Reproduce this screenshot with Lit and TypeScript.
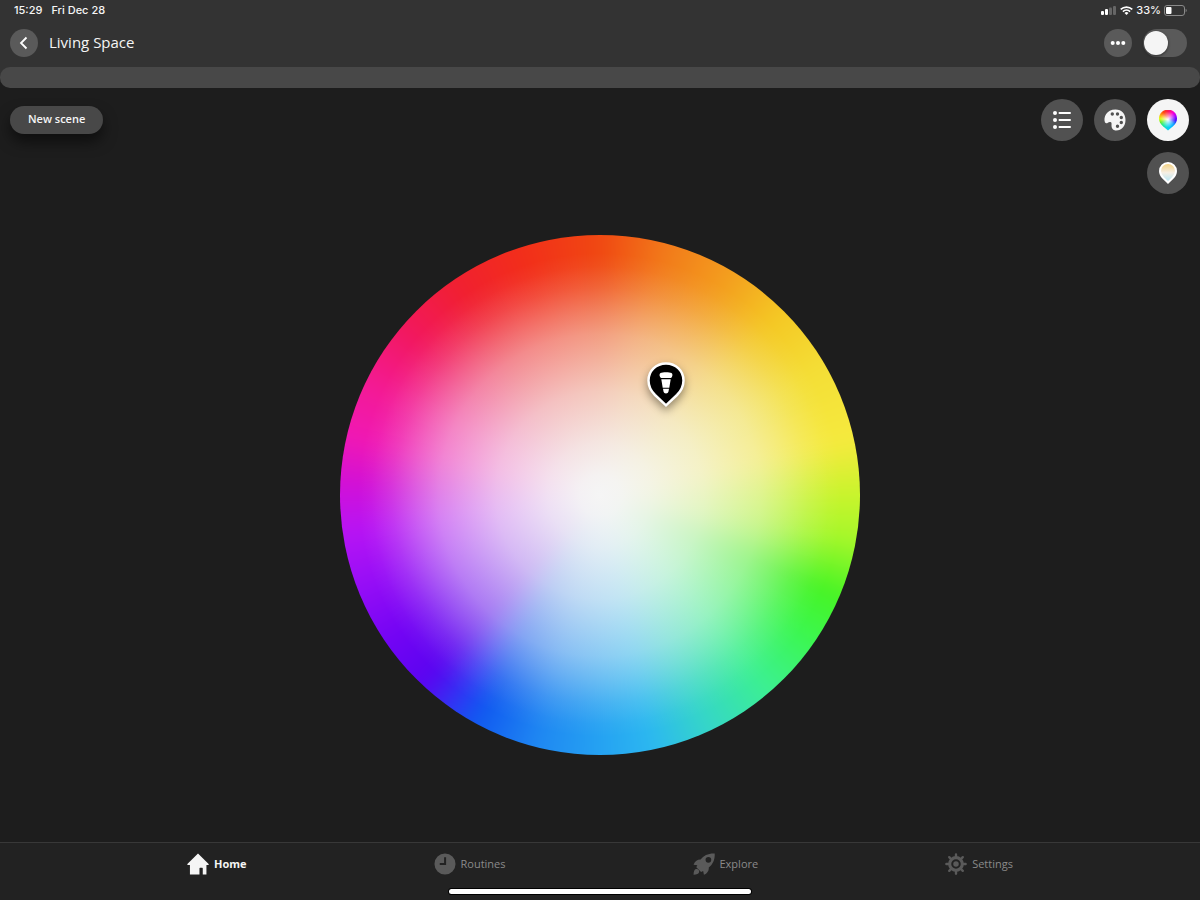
import { LitElement, html, css, svg } from "lit";
import { customElement, state } from "lit/decorators.js";

const icons = {
  home: svg`<path d="M12 .5 23.600 12c.4.5.1 1-.5 1H21.200V23.500H17.200V16.800c0-.4-.2-.6-.6-.6h-2.400c-.4 0-.6.2-.6.6v6.700H3.200V13H.9c-.6 0-.9-.5-.5-1z" fill="currentColor"/>`,
  clock: svg`<path fill-rule="evenodd" fill="currentColor" d="M12 .5a11.500 11.500 0 1 0 0 23 11.500 11.500 0 0 0 0-23zM11 4.500h2.200v8.700H6.300V11H11z"/>`,
  rocket: svg`<path fill-rule="evenodd" fill="currentColor" d="M23.700.5C16.500.2 11.800 2.700 8.300 7.200 5.200 7 2.300 8.600.6 12.800l4.200.5c-.5.8-.9 1.500-1.200 2.300l5.200 5.200c.8-.3 1.500-.7 2.300-1.200l.8 4.200c4.200-1.800 5.600-4.900 5.300-8C21.600 12.300 24 7.500 23.700.5zM16.800 4.300a3.100 3.100 0 1 1 0 6.200 3.100 3.100 0 0 1 0-6.200z"/><path fill="currentColor" d="M3.300 17.500c-1.800.5-2.600 2.600-2.700 6.100 3.500-.1 5.600-.9 6.100-2.700.5-2.100-1.300-3.900-3.400-3.400z"/>`,
  gear: svg`<g fill="none" stroke="currentColor" stroke-linecap="round"><circle cx="12" cy="12" r="6.900" stroke-width="3.400"/><path d="M12 1.500v3M12 19.500v3M1.500 12h3M19.500 12h3M4.600 4.600l2.100 2.100M17.300 17.300l2.100 2.100M4.600 19.400l2.100-2.100M17.300 6.700l2.100-2.100" stroke-width="2.600"/></g><circle cx="12" cy="12" r="3" fill="currentColor"/>`,
};

const tabs = [
  { id: "home", label: "Home", icon: icons.home },
  { id: "routines", label: "Routines", icon: icons.clock },
  { id: "explore", label: "Explore", icon: icons.rocket },
  { id: "settings", label: "Settings", icon: icons.gear },
];

@customElement("hue-wheel")
export class HueWheel extends LitElement {
  static styles = css`
    :host {
      display: block;
      position: relative;
      aspect-ratio: 1;
    }
    .disc {
      display: grid;
      width: 100%;
      height: 100%;
      border-radius: 50%;
      overflow: hidden;
    }
    .hues,
    .white {
      grid-area: 1 / 1;
    }
    .hues {
      margin: -30px;
      filter: blur(9px);
      background: conic-gradient(
        #f04812 0deg,
        #f27a1a 15deg,
        #f39d1e 30deg,
        #f4c824 45deg,
        #f4de36 60deg,
        #f5ea3e 78deg,
        #c8f42c 90deg,
        #a6f72a 100deg,
        #46f425 113deg,
        #3cf74e 124deg,
        #3cf091 139deg,
        #35d6c8 155deg,
        #2cb8f0 168deg,
        #25a2f2 180deg,
        #1f88f2 194deg,
        #1058f0 209deg,
        #2a3cf4 214deg,
        #5a04f0 223deg,
        #7404f4 236deg,
        #980ef6 250deg,
        #b814f4 262deg,
        #d010d8 272deg,
        #f018b4 283deg,
        #f31a96 295deg,
        #f2185c 311deg,
        #f12030 326deg,
        #f22e1a 342deg,
        #f04812 360deg
      );
    }
    .white {
      z-index: 1;
      background: radial-gradient(
        closest-side,
        #f5f5f5 0%,
        rgb(245 245 245 / 0.98) 8%,
        rgb(245 245 245 / 0.91) 20%,
        rgb(245 245 245 / 0.75) 40%,
        rgb(245 245 245 / 0.49) 62%,
        rgb(245 245 245 / 0.35) 70%,
        rgb(245 245 245 / 0.16) 80%,
        rgb(245 245 245 / 0.04) 88%,
        rgb(245 245 245 / 0) 93%
      );
    }
    .pin {
      position: absolute;
      z-index: 2;
      left: 62.7%;
      top: 24.4%;
      width: 40px;
      height: 46px;
      padding: 0;
      border: 0;
      background: none;
      transform: translateX(-50%);
      filter: drop-shadow(0 4px 4px rgb(0 0 0 / 0.4));
    }
    .glyph {
      display: block;
      width: 100%;
      height: 100%;
    }
  `;

  render() {
    return html`
      <div class="disc">
        <div class="hues"></div>
        <div class="white"></div>
      </div>
      <button class="pin" aria-label="Light colour">
        <svg class="glyph" viewBox="0 0 40 46">
          <path
            d="M20 1.500c10 0 17.500 7.600 17.500 17 0 6-2.500 10.500-6.500 14.500L20 43.300 9 33c-4-4-6.500-8.500-6.500-14.500 0-9.400 7.500-17 17.500-17z"
            fill="#000" stroke="#fff" stroke-width="2.500"
          />
          <path d="M14.500 11c2-1 9-1 11 0 1.100.7 1.300 2.500.4 4-.4.700-.7 1-1.300 1h-9.200c-.6 0-.9-.3-1.300-1-.9-1.500-.7-3.300.4-4zM15.300 17.200h9.400l-1.400 8.600h-6.600zM17 26.800h6l-.5 2.700c-.3 1.300-1.200 2-2.500 2s-2.200-.7-2.500-2z" fill="#fff"/>
        </svg>
      </button>
    `;
  }
}

@customElement("app-root")
export class AppRoot extends LitElement {
  @state() private tab = "home";

  static styles = css`
    :host {
      display: flex;
      flex-direction: column;
      min-height: 100vh;
      background: #1d1d1d;
      color: #f5f5f5;
      font-family: "Open Sans", "Noto Sans", sans-serif;
      font-size: 11px;
      line-height: 16px;
    }
    button {
      font: inherit;
      color: inherit;
      border: 0;
      padding: 0;
      cursor: pointer;
    }
    .top {
      background: #333;
    }
    .status {
      display: flex;
      align-items: center;
      justify-content: space-between;
      height: 20px;
      padding: 0 13px 0 14px;
      font-family: Inter, sans-serif;
      font-weight: 500;
    }
    .clock {
      display: flex;
      gap: 9px;
    }
    .indicators {
      display: flex;
      align-items: center;
      gap: 3px;
    }
    .title-row {
      display: flex;
      align-items: center;
      gap: 11px;
      height: 46px;
      padding: 0 13px 1px 10px;
    }
    .title {
      flex: 1;
      margin: 0;
      padding-bottom: 2px;
      font-size: 15px;
      line-height: 20px;
      font-weight: 400;
    }
    .round {
      display: grid;
      place-items: center;
      width: 28px;
      height: 28px;
      border-radius: 50%;
      background: #5a5a5a;
    }
    .power {
      appearance: none;
      display: flex;
      align-items: center;
      width: 44px;
      height: 28px;
      margin: 0;
      padding: 0 1px;
      border-radius: 14px;
      background: #5a5a5a;
    }
    .power::before {
      content: "";
      width: 24px;
      height: 24px;
      border-radius: 50%;
      background: #f5f5f5;
      box-shadow: 0 1px 3px rgb(0 0 0 / 0.5);
    }
    .power:checked {
      justify-content: flex-end;
    }
    .level {
      appearance: none;
      display: block;
      width: 100%;
      height: 21px;
      margin: 0;
      border-radius: 10px;
      background: #484848;
    }
    .level-row {
      background: linear-gradient(#333 50%, #1d1d1d 50%);
    }
    .level::-webkit-slider-thumb {
      appearance: none;
      width: 0;
      height: 21px;
    }
    .stage {
      flex: 1;
      display: flex;
      flex-direction: column;
    }
    .tools {
      display: flex;
      align-items: flex-start;
      justify-content: space-between;
      padding: 11px 11px 10px 10px;
    }
    .scene {
      height: 28px;
      margin-top: 7px;
      padding: 0 18px 2px;
      border-radius: 14px;
      background: #484848;
      font-weight: 600;
      box-shadow: 0 8px 14px rgb(0 0 0 / 0.5);
    }
    .modes {
      display: grid;
      grid-template-columns: repeat(3, 42px);
      gap: 11px;
    }
    .mode {
      display: grid;
      place-items: center;
      width: 42px;
      height: 42px;
      border-radius: 50%;
      background: #515151;
    }
    .mode.active {
      background: #f5f5f5;
    }
    .mode.last {
      grid-column: 3;
    }
    .drop {
      width: 18px;
      height: 21px;
      background:
        radial-gradient(circle at 50% 45%, #fff 0, rgb(255 255 255 / 0.6) 3px, rgb(255 255 255 / 0) 8px),
        conic-gradient(
          at 50% 45%,
          #ff1a50 0deg, #f0c 35deg, #a0f 65deg, #40f 95deg, #09f 130deg,
          #0cf 165deg, #0ed8e0 190deg, #1e8 225deg, #6e2 250deg, #df1 275deg, #fa1 300deg, #f41 330deg, #ff1a50 360deg
        );
      clip-path: path("M9 0C14 0 18 4 18 9c0 3.500-1.500 5.500-4 7.800L9 21 4 16.800C1.500 14.500 0 12.500 0 9 0 4 4 0 9 0z");
    }
    .canvas {
      flex: 1;
      display: grid;
      place-items: center;
      padding: 0 16px 56px;
    }
    .wheel {
      width: min(520px, 100%);
    }
    .tabs {
      display: flex;
      justify-content: space-evenly;
      height: 42px;
      border-top: 1px solid #383838;
      background: #222;
    }
    .tab {
      display: flex;
      align-items: center;
      gap: 5px;
      color: #8a8a8a;
      text-decoration: none;
    }
    .tab-icon {
      width: 22px;
      height: 22px;
      color: #5a5a5a;
    }
    .tab.current {
      color: #f5f5f5;
      font-weight: 700;
    }
    .tab.current .tab-icon {
      color: #f5f5f5;
    }
    .foot {
      display: grid;
      justify-content: center;
      height: 11px;
      padding-top: 4px;
      background: #222;
      grid-template-columns: 25.2%;
    }
    .handle {
      height: 5px;
      border-radius: 3px;
      background: #fff;
      box-shadow: 0 0 0 1px #000;
    }
  `;

  render() {
    return html`
      <header class="top">
        <div class="status">
          <div class="clock"><span>15:29</span><span>Fri Dec 28</span></div>
          <div class="indicators">
            <svg width="16" height="9" viewBox="0 0 16 9">
              <rect y="5" width="3" height="4" rx="1" fill="#fff"/>
              <rect x="4" y="3" width="3" height="6" rx="1" fill="#fff"/>
              <rect x="8" y="1.500" width="3" height="7.500" rx="1" fill="#666"/>
              <rect x="12" width="3" height="9" rx="1" fill="#666"/>
            </svg>
            <svg width="13" height="9" viewBox="0 0 13 9" fill="none" stroke="#fff" stroke-width="1.600">
              <path d="M.7 3.400a8.400 8.400 0 0 1 11.600 0M2.900 5.600a5.200 5.200 0 0 1 7.200 0"/>
              <path d="M4.500 7a3 3 0 0 1 4 0L6.500 9z" fill="#fff" stroke="none"/>
            </svg>
            <span>33%</span>
            <svg width="23" height="11" viewBox="0 0 23 11">
              <rect x=".5" y=".5" width="20" height="10" rx="2.500" fill="none" stroke="#8a8a8a"/>
              <rect x="2" y="2" width="5.500" height="7" rx="1" fill="#fff"/>
              <path d="M21.700 3.800c1.300.6 1.300 2.800 0 3.400z" fill="#8a8a8a"/>
            </svg>
          </div>
        </div>
        <div class="title-row">
          <button class="round" aria-label="Back">
            <svg width="12" height="14" viewBox="0 0 12 14" fill="none" stroke="#fff" stroke-width="1.800">
              <path d="M8.500 1.500 3 7l5.500 5.500"/>
            </svg>
          </button>
          <h1 class="title">Living Space</h1>
          <button class="round" aria-label="More">
            <svg width="16" height="4" viewBox="0 0 16 4" fill="#fff">
              <circle cx="2.700" cy="2" r="2"/><circle cx="8" cy="2" r="2"/><circle cx="13.300" cy="2" r="2"/>
            </svg>
          </button>
          <input class="power" type="checkbox" role="switch" aria-label="Power" />
        </div>
      </header>
      <div class="level-row">
        <input class="level" type="range" min="0" max="100" value="0" aria-label="Brightness" />
      </div>
      <main class="stage">
        <div class="tools">
          <button class="scene">New scene</button>
          <div class="modes">
            <button class="mode" aria-label="List">
              <svg width="20" height="20" viewBox="0 0 20 20" fill="#fff">
                <circle cx="3" cy="3" r="2"/><circle cx="3" cy="10" r="2"/><circle cx="3" cy="17" r="2"/>
                <path d="M7.500 3H18M7.500 10H18M7.500 17H18" stroke="#fff" stroke-width="2" stroke-linecap="round"/>
              </svg>
            </button>
            <button class="mode" aria-label="Scenes">
              <svg width="24" height="24" viewBox="0 0 24 24">
                <path fill="#f5f5f5" fill-rule="evenodd" d="M12.500 1.500C19 1.500 22.500 6 22.500 12s-3.800 10.500-9.300 10.500c-3.200 0-4.700-2.200-4.700-5 0-1.500.3-2.500-.5-3.200-1-.8-2.300-.3-3.200.5-1 .8-2.300.7-2.900-.6C.2 9.500 3.500 1.500 12.500 1.500zM9.300 4.300a1.700 1.700 0 1 0 0 3.400 1.700 1.700 0 0 0 0-3.400zM14.500 4.300a1.700 1.700 0 1 0 0 3.400 1.700 1.700 0 0 0 0-3.400zM18.300 7.800a1.700 1.700 0 1 0 0 3.400 1.700 1.700 0 0 0 0-3.400zM18.300 12.800a1.700 1.700 0 1 0 0 3.400 1.700 1.700 0 0 0 0-3.400zM14.500 16.600a1.700 1.700 0 1 0 0 3.400 1.700 1.700 0 0 0 0-3.400z"/>
              </svg>
            </button>
            <button class="mode active" aria-label="Colour"><span class="drop"></span></button>
            <button class="mode last" aria-label="White tones">
              <svg width="20" height="24" viewBox="0 0 20 24">
                <defs>
                  <linearGradient id="tone" x2="0" y2="1">
                    <stop offset="0" stop-color="#f3cf7a"/>
                    <stop offset=".5" stop-color="#f6efe4"/>
                    <stop offset="1" stop-color="#aee6f8"/>
                  </linearGradient>
                </defs>
                <path d="M10 2c4.600 0 8 3.600 8 8 0 3-1.300 5-3.300 7L10 21.500 5.300 17C3.300 15 2 13 2 10c0-4.400 3.400-8 8-8z" fill="url(#tone)" stroke="#fff" stroke-width="2"/>
              </svg>
            </button>
          </div>
        </div>
        <div class="canvas"><hue-wheel class="wheel"></hue-wheel></div>
      </main>
      <nav class="tabs">
        ${tabs.map(
          (t) => html`<a
            class="tab ${t.id === this.tab ? "current" : ""}"
            href="#${t.id}"
            @click=${() => (this.tab = t.id)}
          ><svg class="tab-icon" viewBox="0 0 24 24">${t.icon}</svg><span>${t.label}</span></a>`
        )}
      </nav>
      <div class="foot"><div class="handle"></div></div>
    `;
  }
}
